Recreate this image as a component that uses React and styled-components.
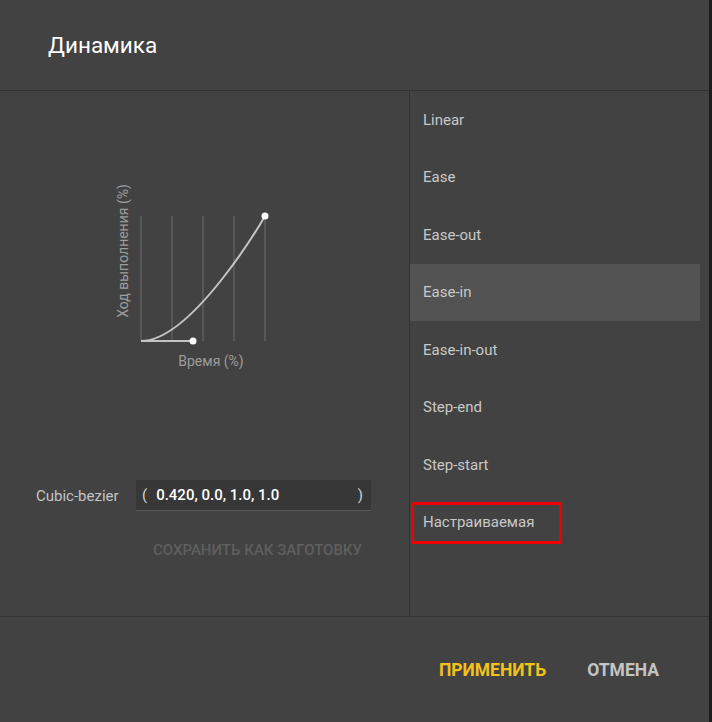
import React, {useState} from 'react';
import styled, {createGlobalStyle} from "styled-components";

const presets = ['Linear', 'Ease', 'Ease-out', 'Ease-in', 'Ease-in-out', 'Step-end', 'Step-start', 'Настраиваемая']

const App = () => {
    const [selected, setSelected] = useState('Ease-in')

    return (
        <>
            <GlobalStyle/>
            <Dialog>
                <Header>Динамика</Header>
                <Body>
                    <LeftPanel>
                        <Chart width="200" height="210" viewBox="0 0 200 210">
                            {[41, 72, 103, 134, 165].map(x =>
                                <line key={x} x1={x} y1="46" x2={x} y2="171" stroke="#575757" strokeWidth="2"/>
                            )}
                            <line x1="41" y1="171" x2="93" y2="171" stroke="#c4c4c4" strokeWidth="2"/>
                            <path d="M41 171 C 93 171, 165 46, 165 46" fill="none" stroke="#c4c4c4" strokeWidth="2"/>
                            <circle cx="93" cy="171" r="3.5" fill="#fff"/>
                            <circle cx="165" cy="46" r="3.5" fill="#fff"/>
                            <text x="111" y="196" textAnchor="middle" fill="#9c9c9c" fontSize="14">Время (%)</text>
                            <text x="0" y="0" textAnchor="middle" fill="#9c9c9c" fontSize="14"
                                  transform="translate(28 81) rotate(-90)">Ход выполнения (%)</text>
                        </Chart>
                        <BezierRow>
                            <FieldLabel>Cubic-bezier</FieldLabel>
                            <BezierInput>
                                <Paren>(</Paren>
                                <BezierValue>0.420, 0.0, 1.0, 1.0</BezierValue>
                                <Paren>)</Paren>
                            </BezierInput>
                        </BezierRow>
                        <SaveButton disabled>Сохранить как заготовку</SaveButton>
                    </LeftPanel>
                    <PresetList>
                        {presets.map(p =>
                            <PresetItem key={p} $active={p === selected} onClick={() => setSelected(p)}>
                                {p === 'Настраиваемая' ? <Marked>{p}</Marked> : p}
                            </PresetItem>
                        )}
                    </PresetList>
                </Body>
                <Footer>
                    <TextButton $primary>Применить</TextButton>
                    <TextButton>Отмена</TextButton>
                </Footer>
            </Dialog>
        </>
    );
};

const GlobalStyle = createGlobalStyle`
  body {
    margin: 0;
    background: #1c1c1c;
    font-family: Roboto, "Noto Sans", sans-serif;
  }
`

const Dialog = styled.div`
  width: 709px;
  height: 722px;
  background: #424242;
  display: flex;
  flex-direction: column;
`

const Header = styled.div`
  height: 90px;
  flex-shrink: 0;
  display: flex;
  align-items: center;
  padding-left: 48px;
  font-size: 22.5px;
  color: #fff;
  border-bottom: 1px solid #333;
`

const Body = styled.div`
  flex: 1;
  display: flex;
  border-bottom: 1px solid #333;
`

const LeftPanel = styled.div`
  width: 409px;
  border-right: 1px solid #333;
  padding-top: 79px;
  display: flex;
  flex-direction: column;
`

const Chart = styled.svg`
  display: block;
  margin-left: 100px;
  font-family: Roboto, sans-serif;
`

const BezierRow = styled.div`
  margin-top: 100px;
  display: flex;
  align-items: center;
  padding-left: 36px;
`

const FieldLabel = styled.div`
  width: 100px;
  font-size: 15px;
  color: #c4c4c4;
`

const BezierInput = styled.div`
  width: 235px;
  height: 31px;
  box-sizing: border-box;
  background: #373737;
  border-bottom: 1px solid #565656;
  display: flex;
  align-items: center;
  padding: 0 8px 0 6px;
  font-size: 15px;
  color: #fff;
`

const Paren = styled.span`
  color: #d0d0d0;
  font-size: 15px;
`

const BezierValue = styled.span`
  flex: 1;
  margin-left: 9px;
  font-weight: 500;
`

const SaveButton = styled.button`
  align-self: flex-start;
  margin: 23px 0 0 153px;
  padding: 0;
  background: transparent;
  border: none;
  font-family: Roboto, sans-serif;
  font-size: 15px;
  font-weight: 500;
  text-transform: uppercase;
  color: #5f5f5f;
  line-height: 32px;
`

const PresetList = styled.ul`
  flex: 1;
  margin: 0;
  padding: 0 9px 0 0;
  list-style: none;
`

const PresetItem = styled.li`
  height: 57.5px;
  display: flex;
  align-items: center;
  padding-left: 13px;
  font-size: 15px;
  color: #c8c8c8;
  background: ${props => props.$active ? '#525252' : 'transparent'};
  cursor: pointer;
`

const Marked = styled.span`
  position: relative;

  &:after {
    content: "";
    position: absolute;
    left: -12px;
    top: -11px;
    width: 145px;
    height: 36px;
    border: 3px solid #ee0000;
    border-radius: 2px;
  }
`

const Footer = styled.div`
  height: 105px;
  display: flex;
  align-items: center;
  justify-content: flex-end;
  padding-right: 50px;
  gap: 41px;
`

const TextButton = styled.button`
  background: transparent;
  border: none;
  padding: 0;
  font-family: Roboto, sans-serif;
  font-size: 17.5px;
  font-weight: 700;
  text-transform: uppercase;
  color: ${props => props.$primary ? '#f4c21b' : '#c4c4c4'};
  cursor: pointer;
`

export default App;
